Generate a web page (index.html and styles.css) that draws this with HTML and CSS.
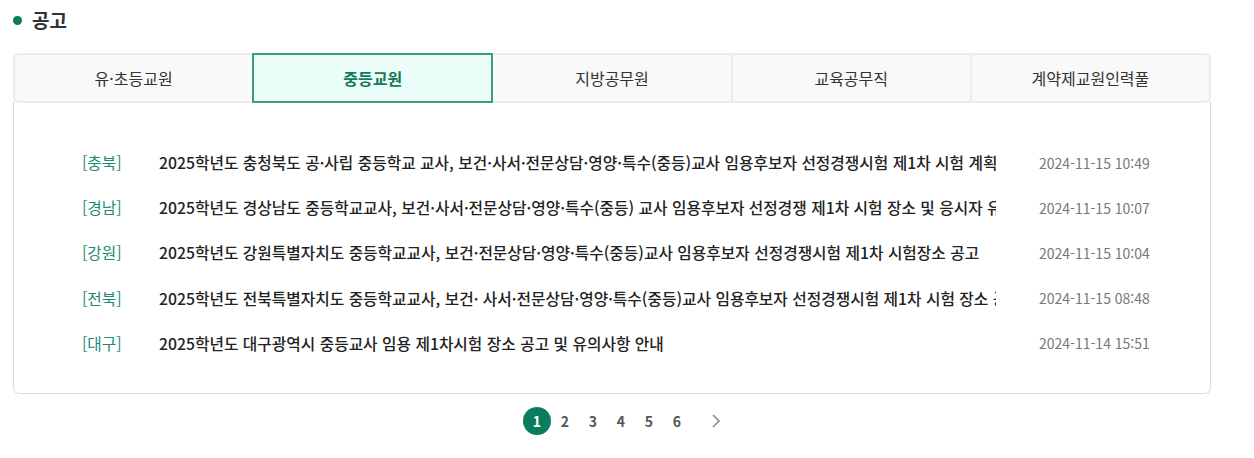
FILE: index.html
```html
<!DOCTYPE html>
<html lang="ko">
<head>
    <meta charset="UTF-8">
    <meta name="viewport" content="width=device-width, initial-scale=1.0">
    <title>공고</title>
    <link rel="stylesheet" href="styles.css">
</head>
<body>
    <div class="notice">
        <h2 class="section-title"><span class="dot"></span>공고</h2>

        <div class="tabs">
            <a class="tab">유·초등교원</a>
            <a class="tab active">중등교원</a>
            <a class="tab">지방공무원</a>
            <a class="tab">교육공무직</a>
            <a class="tab">계약제교원인력풀</a>
        </div>

        <div class="board">
            <ul class="list">
                <li class="row">
                    <span class="region">[충북]</span>
                    <span class="subject">2025학년도 충청북도 공·사립 중등학교 교사, 보건·사서·전문상담·영양·특수(중등)교사 임용후보자 선정경쟁시험 제1차 시험 계획 공고</span>
                    <span class="date">2024-11-15 10:49</span>
                </li>
                <li class="row">
                    <span class="region">[경남]</span>
                    <span class="subject">2025학년도 경상남도 중등학교교사, 보건·사서·전문상담·영양·특수(중등) 교사 임용후보자 선정경쟁 제1차 시험 장소 및 응시자 유의사항 안내</span>
                    <span class="date">2024-11-15 10:07</span>
                </li>
                <li class="row">
                    <span class="region">[강원]</span>
                    <span class="subject">2025학년도 강원특별자치도 중등학교교사, 보건·전문상담·영양·특수(중등)교사 임용후보자 선정경쟁시험 제1차 시험장소 공고</span>
                    <span class="date">2024-11-15 10:04</span>
                </li>
                <li class="row">
                    <span class="region">[전북]</span>
                    <span class="subject">2025학년도 전북특별자치도 중등학교교사, 보건· 사서·전문상담·영양·특수(중등)교사 임용후보자 선정경쟁시험 제1차 시험 장소 공고</span>
                    <span class="date">2024-11-15 08:48</span>
                </li>
                <li class="row">
                    <span class="region">[대구]</span>
                    <span class="subject">2025학년도 대구광역시 중등교사 임용 제1차시험 장소 공고 및 유의사항 안내</span>
                    <span class="date">2024-11-14 15:51</span>
                </li>
            </ul>
        </div>

        <div class="paging">
            <a class="page current">1</a>
            <a class="page">2</a>
            <a class="page">3</a>
            <a class="page">4</a>
            <a class="page">5</a>
            <a class="page">6</a>
            <a class="next">
                <svg width="10" height="16" viewBox="0 0 10 16"><path d="M2 2l6 6-6 6" fill="none" stroke="#888" stroke-width="1.5"/></svg>
            </a>
        </div>
    </div>
</body>
</html>
```

FILE: styles.css
```css
body {
    margin: 0;
    font-family: "Noto Sans CJK KR", "Noto Sans", sans-serif;
    background-color: #fff;
    color: #222;
}
.notice {
    width: 1198px;
    padding: 6px 0 0 13px;
}
.section-title {
    display: flex;
    align-items: center;
    margin: 0 0 19px 0;
    font-size: 19px;
    font-weight: 700;
    color: #333;
    line-height: 28px;
}
.dot {
    width: 9px;
    height: 9px;
    border-radius: 50%;
    background-color: #0b7d5f;
    margin: 0 10px 0 0;
}
.tabs {
    display: flex;
    background-color: #f9f9f9;
    border: 2px solid #ececec;
    border-radius: 6px;
    height: 46px;
    position: relative;
    z-index: 1;
}
.tab {
    flex: 1;
    display: flex;
    align-items: center;
    justify-content: center;
    font-size: 16px;
    color: #333;
    border-left: 2px solid #ececec;
    cursor: pointer;
}
.tab:first-child {
    border-left: none;
}
.tab.active {
    background-color: #ebfdf8;
    border: 2px solid #3a9d82;
    margin: -2px 0;
    color: #17785c;
    font-weight: 700;
}
.tab.active + .tab {
    border-left: none;
}
.board {
    border: 1px solid #dcdcdc;
    border-top: none;
    border-radius: 0 0 6px 6px;
    margin-top: -2px;
    padding: 39px 0 27px 0;
}
.list {
    list-style: none;
    margin: 0;
    padding: 0;
}
.row {
    display: flex;
    align-items: center;
    height: 45.2px;
    font-size: 15.75px;
}
.region {
    width: 77px;
    padding-left: 68px;
    color: #218a76;
    flex-shrink: 0;
}
.subject {
    width: 837px;
    overflow: hidden;
    white-space: nowrap;
    font-weight: 500;
    color: #222;
    flex-shrink: 0;
}
.date {
    margin-left: 43px;
    font-size: 14px;
    color: #777;
}
.paging {
    display: flex;
    align-items: center;
    justify-content: center;
    margin-top: 13px;
    padding-left: 20px;
}
.page {
    width: 28px;
    height: 28px;
    line-height: 28px;
    text-align: center;
    font-size: 14px;
    font-weight: 700;
    color: #555;
    cursor: pointer;
}
.page.current {
    background-color: #0b7d5f;
    color: #fff;
    border-radius: 50%;
}
.next {
    display: flex;
    margin-left: 20px;
}
```
